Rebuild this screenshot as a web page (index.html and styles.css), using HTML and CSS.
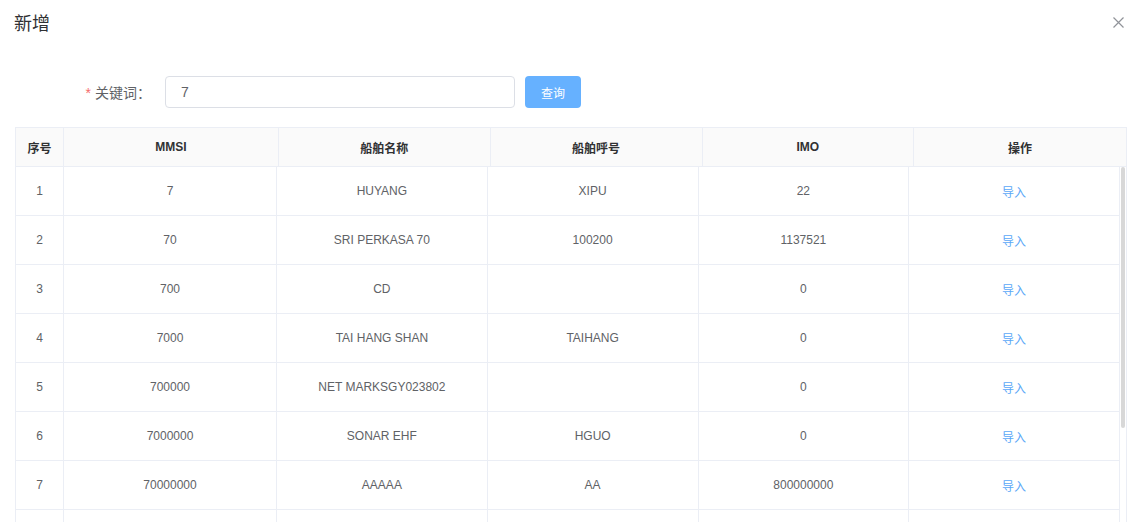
FILE: index.html
```html
<!DOCTYPE html>
<html lang="zh">
<head>
<meta charset="utf-8">
<title>新增</title>
<link rel="stylesheet" href="styles.css">
</head>
<body>
<div class="dialog">
  <div class="dialog-header">
    <span class="dialog-title">新增</span>
    <button class="close" aria-label="关闭">
      <svg width="11" height="11" viewBox="0 0 11 11"><path d="M0.5 0.5L10.5 10.5M10.5 0.5L0.5 10.5" stroke="#909399" stroke-width="1.2" fill="none"/></svg>
    </button>
  </div>
  <div class="dialog-body">
    <div class="form-row">
      <label class="form-label"><span class="req">*</span>关键词：</label>
      <div class="input"><span class="input-value">7</span></div>
      <button class="btn">查询</button>
    </div>
    <div class="table">
      <div class="thead">
        <div class="th">序号</div>
        <div class="th">MMSI</div>
        <div class="th">船舶名称</div>
        <div class="th">船舶呼号</div>
        <div class="th">IMO</div>
        <div class="th">操作</div>
      </div>
      <div class="tbody">
        <div class="rows">
          <div class="row"><div class="td">1</div><div class="td">7</div><div class="td">HUYANG</div><div class="td">XIPU</div><div class="td">22</div><div class="td"><a class="link">导入</a></div></div>
          <div class="row"><div class="td">2</div><div class="td">70</div><div class="td">SRI PERKASA 70</div><div class="td">100200</div><div class="td">1137521</div><div class="td"><a class="link">导入</a></div></div>
          <div class="row"><div class="td">3</div><div class="td">700</div><div class="td">CD</div><div class="td"></div><div class="td">0</div><div class="td"><a class="link">导入</a></div></div>
          <div class="row"><div class="td">4</div><div class="td">7000</div><div class="td">TAI HANG SHAN</div><div class="td">TAIHANG</div><div class="td">0</div><div class="td"><a class="link">导入</a></div></div>
          <div class="row"><div class="td">5</div><div class="td">700000</div><div class="td">NET MARKSGY023802</div><div class="td"></div><div class="td">0</div><div class="td"><a class="link">导入</a></div></div>
          <div class="row"><div class="td">6</div><div class="td">7000000</div><div class="td">SONAR EHF</div><div class="td">HGUO</div><div class="td">0</div><div class="td"><a class="link">导入</a></div></div>
          <div class="row"><div class="td">7</div><div class="td">70000000</div><div class="td">AAAAA</div><div class="td">AA</div><div class="td">800000000</div><div class="td"><a class="link">导入</a></div></div>
          <div class="row"><div class="td"></div><div class="td"></div><div class="td"></div><div class="td"></div><div class="td"></div><div class="td"></div></div>
        </div>
        <div class="gutter"><div class="thumb"></div></div>
      </div>
    </div>
  </div>
</div>
</body>
</html>
```

FILE: styles.css
```css
html, body {
  margin: 0;
  padding: 0;
  overflow: hidden;
  background: #fff;
}

body {
  font-family: "Liberation Sans", "Noto Sans CJK SC", sans-serif;
  color: #606266;
}

.dialog {
  width: 1137px;
  height: 522px;
  overflow: hidden;
}

.dialog-header {
  display: flex;
  justify-content: space-between;
  align-items: center;
  padding: 12px 13px 0 14px;
  height: 24px;
}

.dialog-title {
  font-size: 18px;
  line-height: 24px;
  color: #303133;
}

.close {
  border: none;
  background: none;
  padding: 0;
  width: 11px;
  height: 11px;
  display: flex;
  margin-top: -4px;
}

.dialog-body {
  padding: 40px 10px 0 15px;
}

.form-row {
  display: flex;
  align-items: center;
  height: 32px;
}

.form-label {
  width: 150px;
  box-sizing: border-box;
  padding-right: 14px;
  text-align: right;
  font-size: 14px;
  color: #606266;
}

.req {
  color: #f56c6c;
  margin-right: 4px;
}

.input {
  width: 350px;
  height: 32px;
  box-sizing: border-box;
  border: 1px solid #dcdfe6;
  border-radius: 4px;
  padding: 0 15px;
  display: flex;
  align-items: center;
  font-size: 14px;
  color: #606266;
}

.btn {
  margin-left: 10px;
  width: 56px;
  height: 32px;
  border: none;
  border-radius: 4px;
  background: #66b1ff;
  color: #fff;
  font-size: 12px;
  font-family: inherit;
  padding: 0;
}

.table {
  margin-top: 19px;
  width: 1112px;
  box-sizing: border-box;
  border: 1px solid #ebeef5;
  border-bottom: none;
  font-size: 12px;
}

.thead {
  display: grid;
  grid-template-columns: 48px 215px repeat(4, 1fr);
  background: #fafafa;
}

.th {
  height: 38px;
  display: flex;
  align-items: center;
  justify-content: center;
  font-weight: bold;
  color: #303133;
  border-right: 1px solid #ebeef5;
  border-bottom: 1px solid #ebeef5;
}

.th:last-child {
  border-right: none;
}

.tbody {
  display: flex;
}

.rows {
  flex: 1;
}

.gutter {
  width: 6px;
  padding-left: 1px;
  box-sizing: border-box;
}

.thumb {
  width: 4px;
  height: 261px;
  background: #d8d8d8;
  border-radius: 3px;
}

.row {
  display: grid;
  grid-template-columns: 48px 213px repeat(4, 1fr);
}

.td {
  height: 48px;
  display: flex;
  align-items: center;
  justify-content: center;
  color: #606266;
  border-right: 1px solid #ebeef5;
  border-bottom: 1px solid #ebeef5;
}

.link {
  color: #5ba8f7;
  cursor: pointer;
}
```
